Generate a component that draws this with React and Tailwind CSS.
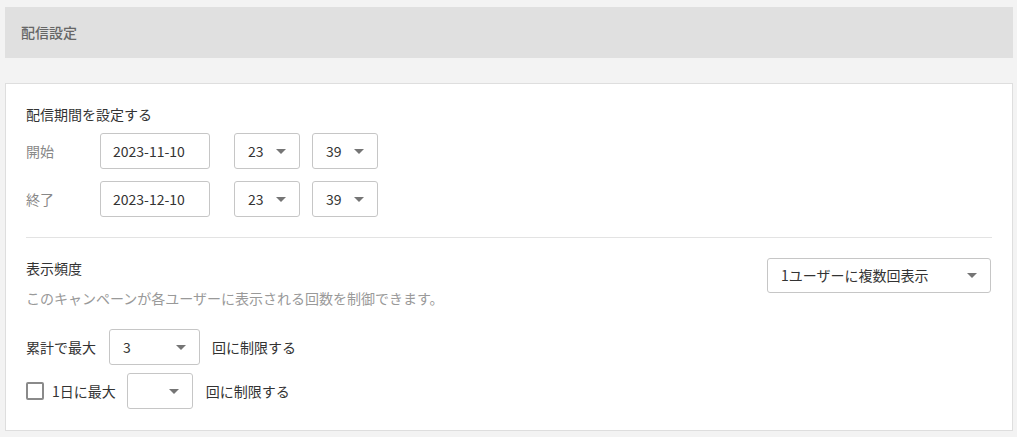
const font = { fontFamily: '"Noto Sans CJK JP", "Noto Sans", sans-serif' };

function Caret() {
  return (
    <svg width="10" height="5" viewBox="0 0 10 5" className="shrink-0">
      <path d="M0 0 L10 0 L5 5 Z" fill="#757575" />
    </svg>
  );
}

function Select({ value, className }) {
  return (
    <div className={`flex items-center justify-between rounded-[3px] border border-[#c6c6c6] bg-white pl-[13px] pr-[13px] text-[14px] text-[#333] ${className}`}>
      <span>{value}</span>
      <Caret />
    </div>
  );
}

function DateInput({ value }) {
  return (
    <div className="flex h-[36px] w-[110px] items-center rounded-[3px] border border-[#c6c6c6] bg-white pl-[12px] text-[14px] text-[#333]">
      {value}
    </div>
  );
}

function PeriodRow({ label, date }) {
  return (
    <div className="flex items-center">
      <span className="w-[74px] text-[14px] text-[#888]">{label}</span>
      <DateInput value={date} />
      <Select value="23" className="ml-[24px] h-[36px] w-[66px]" />
      <Select value="39" className="ml-[12px] h-[36px] w-[66px]" />
    </div>
  );
}

export default function App() {
  return (
    <div className="min-h-[437px] bg-[#f3f3f3] px-[5px] pt-[7px] pb-[6px]" style={font}>
      <div className="flex h-[51px] w-[1008px] items-center bg-[#e0e0e0] pl-[16px] text-[14px] font-medium text-[#666]">
        配信設定
      </div>

      <div className="mt-[25px] w-[1008px] border border-[#dedede] bg-white px-[20px] pt-[20px] pb-[21px]">
        <div className="text-[14px] leading-[20px] text-[#333]">配信期間を設定する</div>
        <div className="mt-[9px] flex flex-col gap-[12px]">
          <PeriodRow label="開始" date="2023-11-10" />
          <PeriodRow label="終了" date="2023-12-10" />
        </div>

        <div className="mt-[20px] h-px bg-[#e3e3e3]" />

        <div className="mt-[20px] flex items-start justify-between">
          <div>
            <div className="text-[14px] leading-[20px] text-[#333]">表示頻度</div>
            <div className="mt-[10px] text-[14px] leading-[20px] text-[#999]">
              このキャンペーンが各ユーザーに表示される回数を制御できます。
            </div>
          </div>
          <Select value="1ユーザーに複数回表示" className="mr-px h-[35px] w-[224px] pr-[12px]" />
        </div>

        <div className="mt-[21px] flex items-center text-[14px] text-[#333]">
          <span>累計で最大</span>
          <Select value="3" className="ml-[13px] h-[36px] w-[91px] pr-[12px]" />
          <span className="ml-[12px]">回に制限する</span>
        </div>

        <div className="mt-[8px] flex items-center text-[14px] text-[#333]">
          <span className="h-[18px] w-[18px] rounded-[2px] border-2 border-[#8a8a8a] bg-white" />
          <span className="ml-[8px]">1日に最大</span>
          <Select value="" className="ml-[11px] h-[36px] w-[66px] pr-[12px]" />
          <span className="ml-[13px]">回に制限する</span>
        </div>
      </div>
    </div>
  );
}
